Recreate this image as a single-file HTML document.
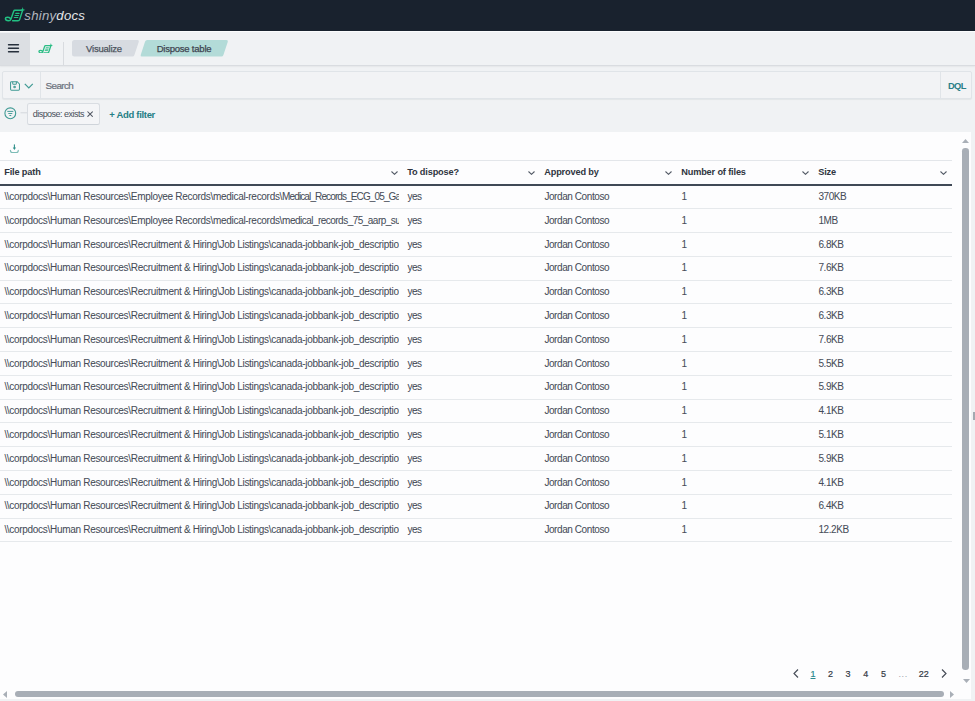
<!DOCTYPE html>
<html><head><meta charset="utf-8">
<style>
*{box-sizing:border-box;margin:0;padding:0}
html,body{width:975px;height:701px;overflow:hidden;background:#f0f2f4;font-family:"Liberation Sans",sans-serif}
.abs{position:absolute}
#hdr{left:0;top:0;width:975px;height:31px;background:#19222e}
#nav{left:0;top:31px;width:975px;height:34px;background:#f0f2f4;border-top:1.5px solid #fbfcfd}
#navsh{left:0;top:65px;width:975px;height:1px;background:#d9dce0;box-shadow:0 1px 1.5px rgba(0,0,0,0.06)}
#menu{left:0;top:33px;width:30px;height:32px;background:#dcdfe3}
.hl{position:absolute;left:8px;width:11px;height:1.6px;background:#27303c;border-radius:1px}
#sep{left:63px;top:42px;width:1px;height:23px;background:#d8dbdf}
.bc{position:absolute;top:40.9px;height:16px;font-size:9.5px;line-height:16px;color:#4d535e;letter-spacing:-0.22px;-webkit-text-stroke:0.25px currentColor;text-align:center}
#search{left:2px;top:71px;width:969.5px;height:28px;background:#f2f3f5;border:1px solid #e0e4e8;border-radius:2px;box-shadow:0 1px 1px rgba(60,80,90,0.07)}
#panel{left:0;top:132px;width:971px;height:567px;background:#fdfdfe;overflow:hidden}
table{border-collapse:collapse;table-layout:fixed;position:absolute;left:0;top:27.5px;width:952px}
td,th{overflow:hidden;white-space:nowrap;text-align:left;padding:0 4px}
th{height:25px;font-size:9.2px;font-weight:bold;color:#2f3540;padding-top:0.3px;padding-left:4.2px;letter-spacing:-0.15px;border-top:1px solid #e3e6ea;border-bottom:2px solid #404956;position:relative}
.c{overflow:hidden;white-space:nowrap;position:relative;top:-0.4px}
td:first-child{letter-spacing:-0.3px}
td{height:23.8px;padding-left:4.4px;font-size:10px;color:#464c58;-webkit-text-stroke:0.05px currentColor;letter-spacing:-0.42px;border-bottom:1px solid #e6e9ec}
.pg{position:absolute;top:536.5px;width:6px;height:9px;line-height:0}
.pn{position:absolute;top:536.5px;font-size:9px;line-height:11px;color:#343a45;-webkit-text-stroke:0.2px currentColor}
.chev{position:absolute;right:5px;top:10.6px;width:7px;height:4px}
</style></head><body>
<div id="hdr" class="abs">
  <svg class="abs" style="left:0;top:0" width="30" height="31" viewBox="0 0 30 31">
    <g fill="none" stroke="#22c083" stroke-width="1.45" stroke-linecap="round" stroke-linejoin="round">
      <path d="M22.5 10.3 L14.9 10.3 Q14 10.3 13.7 11.2 L11 19 Q10.4 20.8 8.6 20.8 Q5.4 20.8 5.4 18.6 Q5.4 17.3 7.3 17.3 Q9.4 17.3 10.4 18.4"/>
      <path d="M22.6 10.4 L19.6 19.6 Q19.2 20.8 18 20.8 L12.6 20.8"/>
      <path d="M15.8 13.4 H19.1 M15 15.5 H18.5 M14.3 17.5 H17.8" stroke-width="1.1"/>
    </g>
    <path d="M22.7 7 L23.3 9.2 L25.4 10 L23.2 10.6 L22.6 12 L21.9 10.6 L20.2 10 L22 9.2Z" fill="#22c083"/>
  </svg>
  <div class="abs" style="left:24.3px;top:8.7px;font-size:13.2px;font-style:italic;line-height:14px;letter-spacing:0.25px"><span style="color:#b3b7be">shiny</span><span style="color:#e3e5e8">docs</span></div>
</div>
<div id="nav" class="abs"></div>
<div id="navsh" class="abs"></div>
<div id="menu" class="abs">
  <svg class="abs" style="left:0;top:0" width="30" height="32" viewBox="0 0 30 32"><path d="M8.5 11.7 H18.5 M8.5 15.2 H18.5 M8.5 18.7 H18.5" stroke="#27303c" stroke-width="1.35" stroke-linecap="round"/></svg>
</div>
<svg class="abs" style="left:38.3px;top:42.8px" width="15.2" height="10.7" viewBox="4 6.5 22 15.5">
    <g fill="none" stroke="#2bbd85" stroke-width="1.9" stroke-linecap="round" stroke-linejoin="round">
      <path d="M22.5 10.3 L14.9 10.3 Q14 10.3 13.7 11.2 L11 19 Q10.4 20.8 8.6 20.8 Q5.4 20.8 5.4 18.6 Q5.4 17.3 7.3 17.3 Q9.4 17.3 10.4 18.4"/>
      <path d="M22.6 10.4 L19.6 19.6 Q19.2 20.8 18 20.8 L12.6 20.8"/>
      <path d="M15.8 13.4 H19.1 M15 15.5 H18.5 M14.3 17.5 H17.8" stroke-width="1.3"/>
    </g>
    <path d="M22.7 6.6 L23.4 9.1 L25.8 10 L23.3 10.7 L22.6 12 L21.8 10.7 L19.8 10 L22 9.1Z" fill="#2bbd85"/>
  </svg>
<div id="sep" class="abs"></div>
<svg class="abs" style="left:72px;top:40px" width="158" height="17">
  <path d="M2.5 0 H65.5 Q67.3 0 66.8 1.7 L62.4 15 Q61.9 16.6 60.3 16.6 H2.5 Q0 16.6 0 14.1 V2.5 Q0 0 2.5 0Z" fill="#d7dbe1"/>
  <path d="M74.6 0 H154.5 Q156.3 0 155.8 1.7 L151.4 15 Q150.9 16.6 149.3 16.6 H70 Q68.2 16.6 68.7 14.9 L73.1 1.6 Q73.6 0 75.2 0Z" fill="#b3dbd8"/>
</svg>
<div class="bc" style="left:72px;width:64px">Visualize</div>
<div class="bc" style="left:142px;width:84px;color:#3e4450">Dispose table</div>

<div id="search" class="abs"></div>
<div class="abs" style="left:40px;top:72px;width:1px;height:26px;background:#e0e4e8"></div>
<div class="abs" style="left:940px;top:72px;width:1px;height:26px;background:#e0e4e8"></div>
<svg class="abs" style="left:9.6px;top:80.6px" width="10.3" height="10.3" viewBox="0 0 11 11">
  <g fill="none" stroke="#3f9a94" stroke-width="1.1" stroke-linejoin="round">
    <path d="M1.6 0.7 H7.6 L10.1 3.2 V8.9 Q10.1 9.9 9.1 9.9 H1.6 Q0.6 9.9 0.6 8.9 V1.7 Q0.6 0.7 1.6 0.7Z"/>
    <path d="M2.9 0.8 V2.6 Q2.9 3.4 3.7 3.4 H6 Q6.8 3.4 6.8 2.6 V0.8"/>
    <circle cx="4.9" cy="6.4" r="0.85"/>
  </g>
</svg>
<svg class="abs" style="left:24px;top:83px" width="10" height="6" viewBox="0 0 10 6">
  <path d="M0.8 0.8 L4.8 4.8 L8.8 0.8" fill="none" stroke="#3f9a94" stroke-width="1.2"/>
</svg>
<div class="abs" style="left:45.5px;top:79.4px;font-size:9.9px;line-height:14px;color:#6a707b;letter-spacing:-0.6px;-webkit-text-stroke:0.2px currentColor">Search</div>
<div class="abs" style="left:948px;top:79px;font-size:9.3px;font-weight:bold;line-height:14px;color:#2a8088;letter-spacing:-0.6px">DQL</div>

<svg class="abs" style="left:4px;top:107px" width="30" height="13" viewBox="0 0 30 13">
  <circle cx="6.3" cy="6.3" r="5.4" fill="none" stroke="#3f9a94" stroke-width="1.1"/>
  <path d="M3.3 4.4 H9.3 M4.3 6.5 H8.3 M5.4 8.5 H7.2" stroke="#3f9a94" stroke-width="0.95"/>
  <path d="M16.5 5.8 H23" stroke="#d3d7dc" stroke-width="1"/>
</svg>
<div class="abs" style="left:27px;top:103px;width:72.7px;height:21.5px;border:1px solid #d9dde2;border-bottom-color:#cfd4da;border-radius:2.5px;background:#f4f5f7"></div>
<div class="abs" style="left:32.7px;top:107.7px;font-size:9px;line-height:13px;color:#4a505b;letter-spacing:-0.52px">dispose: exists</div>
<svg class="abs" style="left:87px;top:111px" width="6.2" height="6.2" viewBox="0 0 6.2 6.2"><path d="M0.5 0.5 L5.7 5.7 M5.7 0.5 L0.5 5.7" stroke="#4f5561" stroke-width="1.05"/></svg>
<div class="abs" style="left:109.3px;top:108px;font-size:9.5px;font-weight:bold;line-height:13px;color:#247e84;letter-spacing:-0.32px">+ Add filter</div>
<div id="panel" class="abs">
<table>
<colgroup><col style="width:403px"><col style="width:137px"><col style="width:137px"><col style="width:137px"><col style="width:138px"></colgroup>
<thead><tr><th>File path<svg class="chev" viewBox="0 0 7 4"><path d="M0.5 0.5 L3.5 3.3 L6.5 0.5" fill="none" stroke="#535a66" stroke-width="1.1"/></svg></th><th>To dispose?<svg class="chev" viewBox="0 0 7 4"><path d="M0.5 0.5 L3.5 3.3 L6.5 0.5" fill="none" stroke="#535a66" stroke-width="1.1"/></svg></th><th>Approved by<svg class="chev" viewBox="0 0 7 4"><path d="M0.5 0.5 L3.5 3.3 L6.5 0.5" fill="none" stroke="#535a66" stroke-width="1.1"/></svg></th><th>Number of files<svg class="chev" viewBox="0 0 7 4"><path d="M0.5 0.5 L3.5 3.3 L6.5 0.5" fill="none" stroke="#535a66" stroke-width="1.1"/></svg></th><th>Size<svg class="chev" viewBox="0 0 7 4"><path d="M0.5 0.5 L3.5 3.3 L6.5 0.5" fill="none" stroke="#535a66" stroke-width="1.1"/></svg></th></tr></thead>
<tbody>

<tr><td><div class="c">\\corpdocs\Human Resources\Employee Records\medical-records\<span style="letter-spacing:-0.88px">Medical_Records_ECG_05_Gait_Analysis.pdf</span></div></td><td><div class="c">yes</div></td><td><div class="c">Jordan Contoso</div></td><td><div class="c">1</div></td><td><div class="c">370KB</div></td></tr>
<tr><td><div class="c">\\corpdocs\Human Resources\Employee Records\medical-records\<span style="letter-spacing:-0.52px">medical_records_75_aarp_summary.pdf</span></div></td><td><div class="c">yes</div></td><td><div class="c">Jordan Contoso</div></td><td><div class="c">1</div></td><td><div class="c">1MB</div></td></tr>
<tr><td><div class="c">\\corpdocs\Human Resources\Recruitment &amp; Hiring\Job Listings\canada-jobbank-job_description.docx</div></td><td><div class="c">yes</div></td><td><div class="c">Jordan Contoso</div></td><td><div class="c">1</div></td><td><div class="c">6.8KB</div></td></tr>
<tr><td><div class="c">\\corpdocs\Human Resources\Recruitment &amp; Hiring\Job Listings\canada-jobbank-job_description.docx</div></td><td><div class="c">yes</div></td><td><div class="c">Jordan Contoso</div></td><td><div class="c">1</div></td><td><div class="c">7.6KB</div></td></tr>
<tr><td><div class="c">\\corpdocs\Human Resources\Recruitment &amp; Hiring\Job Listings\canada-jobbank-job_description.docx</div></td><td><div class="c">yes</div></td><td><div class="c">Jordan Contoso</div></td><td><div class="c">1</div></td><td><div class="c">6.3KB</div></td></tr>
<tr><td><div class="c">\\corpdocs\Human Resources\Recruitment &amp; Hiring\Job Listings\canada-jobbank-job_description.docx</div></td><td><div class="c">yes</div></td><td><div class="c">Jordan Contoso</div></td><td><div class="c">1</div></td><td><div class="c">6.3KB</div></td></tr>
<tr><td><div class="c">\\corpdocs\Human Resources\Recruitment &amp; Hiring\Job Listings\canada-jobbank-job_description.docx</div></td><td><div class="c">yes</div></td><td><div class="c">Jordan Contoso</div></td><td><div class="c">1</div></td><td><div class="c">7.6KB</div></td></tr>
<tr><td><div class="c">\\corpdocs\Human Resources\Recruitment &amp; Hiring\Job Listings\canada-jobbank-job_description.docx</div></td><td><div class="c">yes</div></td><td><div class="c">Jordan Contoso</div></td><td><div class="c">1</div></td><td><div class="c">5.5KB</div></td></tr>
<tr><td><div class="c">\\corpdocs\Human Resources\Recruitment &amp; Hiring\Job Listings\canada-jobbank-job_description.docx</div></td><td><div class="c">yes</div></td><td><div class="c">Jordan Contoso</div></td><td><div class="c">1</div></td><td><div class="c">5.9KB</div></td></tr>
<tr><td><div class="c">\\corpdocs\Human Resources\Recruitment &amp; Hiring\Job Listings\canada-jobbank-job_description.docx</div></td><td><div class="c">yes</div></td><td><div class="c">Jordan Contoso</div></td><td><div class="c">1</div></td><td><div class="c">4.1KB</div></td></tr>
<tr><td><div class="c">\\corpdocs\Human Resources\Recruitment &amp; Hiring\Job Listings\canada-jobbank-job_description.docx</div></td><td><div class="c">yes</div></td><td><div class="c">Jordan Contoso</div></td><td><div class="c">1</div></td><td><div class="c">5.1KB</div></td></tr>
<tr><td><div class="c">\\corpdocs\Human Resources\Recruitment &amp; Hiring\Job Listings\canada-jobbank-job_description.docx</div></td><td><div class="c">yes</div></td><td><div class="c">Jordan Contoso</div></td><td><div class="c">1</div></td><td><div class="c">5.9KB</div></td></tr>
<tr><td><div class="c">\\corpdocs\Human Resources\Recruitment &amp; Hiring\Job Listings\canada-jobbank-job_description.docx</div></td><td><div class="c">yes</div></td><td><div class="c">Jordan Contoso</div></td><td><div class="c">1</div></td><td><div class="c">4.1KB</div></td></tr>
<tr><td><div class="c">\\corpdocs\Human Resources\Recruitment &amp; Hiring\Job Listings\canada-jobbank-job_description.docx</div></td><td><div class="c">yes</div></td><td><div class="c">Jordan Contoso</div></td><td><div class="c">1</div></td><td><div class="c">6.4KB</div></td></tr>
<tr><td><div class="c">\\corpdocs\Human Resources\Recruitment &amp; Hiring\Job Listings\canada-jobbank-job_description.docx</div></td><td><div class="c">yes</div></td><td><div class="c">Jordan Contoso</div></td><td><div class="c">1</div></td><td><div class="c">12.2KB</div></td></tr>
</tbody>
</table>
<svg class="abs" style="left:0;top:0" width="30" height="30" viewBox="0 132 30 30">
  <path d="M14.4 144.8 V148.4" stroke="#2f8f8a" stroke-width="1.1" stroke-linecap="round"/>
  <path d="M12.8 147.6 H16 L14.4 149.9Z" fill="#2f8f8a"/>
  <path d="M10.4 150.2 Q10.4 152.5 12.4 152.5 H16.4 Q18.3 152.5 18.3 150.2" fill="none" stroke="#7dbcb7" stroke-width="1.1" stroke-linecap="round"/>
</svg>
<div class="pg" style="left:793.2px"><svg width="6" height="9" viewBox="0 0 6 9"><path d="M5 0.5 L1 4.5 L5 8.5" fill="none" stroke="#454b56" stroke-width="1.15"/></svg></div>
<div class="pn" style="left:810.5px;color:#2a8a8e;text-decoration:underline">1</div>
<div class="pn" style="left:828px">2</div>
<div class="pn" style="left:845.5px">3</div>
<div class="pn" style="left:863.2px">4</div>
<div class="pn" style="left:881px">5</div>
<div class="pn" style="left:898.5px;color:#9aa0aa;letter-spacing:0.6px;-webkit-text-stroke:0">...</div>
<div class="pn" style="left:918.8px">22</div>
<div class="pg" style="left:940.8px"><svg width="6" height="9" viewBox="0 0 6 9"><path d="M1 0.5 L5 4.5 L1 8.5" fill="none" stroke="#454b56" stroke-width="1.15"/></svg></div>
<!-- vertical scrollbar -->
<svg class="abs" style="left:962px;top:7px" width="7" height="4" viewBox="0 0 7 4"><path d="M0 4 L3.5 0 L7 4Z" fill="#a9afb7"/></svg>
<div class="abs" style="left:962.3px;top:16px;width:6.3px;height:521.6px;border-radius:3.2px;background:#a8aeb6"></div>
<svg class="abs" style="left:962.5px;top:546.5px" width="7" height="4" viewBox="0 0 7 4"><path d="M0 0 L7 0 L3.5 4Z" fill="#a9afb7"/></svg>
<!-- horizontal scrollbar -->
<svg class="abs" style="left:3px;top:559px" width="4" height="7" viewBox="0 0 4 7"><path d="M4 0 L4 7 L0 3.5Z" fill="#a9afb7"/></svg>
<div class="abs" style="left:15.2px;top:559px;width:928.8px;height:6.3px;border-radius:3.2px;background:#a8aeb6"></div>
<svg class="abs" style="left:950.3px;top:559px" width="4" height="7" viewBox="0 0 4 7"><path d="M0 0 L4 3.5 L0 7Z" fill="#a9afb7"/></svg>

</div>
<div class="abs" style="left:973px;top:412px;width:1.8px;height:8px;background:#a3a9b1"></div>
</body></html>
